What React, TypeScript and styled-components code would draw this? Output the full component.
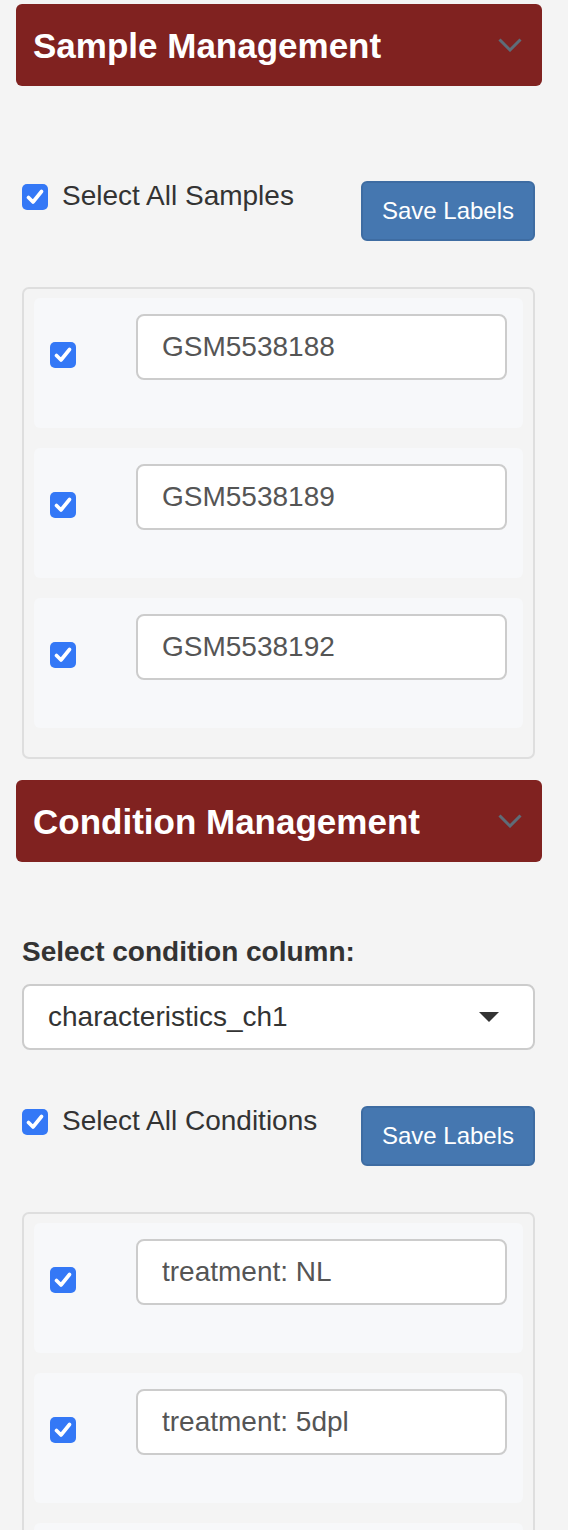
import React from 'react';
import styled, { createGlobalStyle } from 'styled-components';

const GlobalStyle = createGlobalStyle`
  html, body {
    margin: 0;
    padding: 0;
    background: #f4f4f4;
  }
  body {
    font-family: "Liberation Sans", Arial, Helvetica, sans-serif;
    color: #333;
  }
  * { box-sizing: border-box; }
`;

const Page = styled.div`
  width: 568px;
  padding: 4px 26px 40px 16px;
`;

const PanelHeader = styled.div<{ $top?: number }>`
  display: flex;
  align-items: center;
  justify-content: space-between;
  height: 82px;
  margin-top: ${(p) => p.$top ?? 0}px;
  padding: 0 20px 0 17px;
  background: #802220;
  border-radius: 6px;
`;

const PanelTitle = styled.h2`
  margin: 0;
  font-size: 35px;
  font-weight: 700;
  line-height: 1;
  color: #ffffff;
`;

const Chevron = styled.svg`
  width: 24px;
  height: 14px;
  display: block;
`;

const Body = styled.div`
  margin: 0 7px 0 6px;
`;

const SelectAllRow = styled.div<{ $top: number }>`
  display: flex;
  justify-content: space-between;
  align-items: flex-start;
  margin-top: ${(p) => p.$top}px;
`;

const CheckLabel = styled.label`
  display: flex;
  align-items: flex-start;
  gap: 14px;
  font-size: 28px;
  line-height: 40px;
  color: #333;
`;

const Box = styled.span<{ $top?: number }>`
  display: inline-flex;
  align-items: center;
  justify-content: center;
  flex: none;
  width: 26px;
  height: 26px;
  margin-top: ${(p) => p.$top ?? 0}px;
  background: #3478f6;
  border-radius: 5px;
`;

const SaveButton = styled.button`
  margin-top: 5px;
  height: 60px;
  padding: 0 19px;
  font-family: inherit;
  font-size: 24px;
  color: #ffffff;
  background: #4577b0;
  border: 2px solid #3e6ca2;
  border-radius: 6px;
`;

const ListBox = styled.div`
  margin-top: 46px;
  padding: 9px 10px;
  border: 2px solid #dedede;
  border-radius: 7px;
`;

const Item = styled.div`
  display: flex;
  align-items: flex-start;
  margin-bottom: 20px;
  padding: 16px 16px 48px;
  background: #f7f8fa;
  border-radius: 6px;
`;

const ItemCheckCol = styled.div`
  width: 86px;
  flex: none;
  padding-top: 28px;
`;

const LabelInput = styled.input`
  flex: 1;
  min-width: 0;
  height: 66px;
  padding: 0 24px;
  font-family: inherit;
  font-size: 28px;
  color: #555;
  background: #ffffff;
  border: 2px solid #cccccc;
  border-radius: 8px;
  outline: none;
`;

const FieldLabel = styled.label`
  display: block;
  margin-top: 70px;
  margin-bottom: 12px;
  font-size: 28px;
  font-weight: 700;
  line-height: 40px;
  color: #333;
`;

const SelectBox = styled.div`
  display: flex;
  align-items: center;
  justify-content: space-between;
  height: 66px;
  padding: 0 34px 0 24px;
  font-size: 28px;
  color: #333;
  background: #ffffff;
  border: 2px solid #cccccc;
  border-radius: 8px;
`;

const Caret = styled.span`
  width: 0;
  height: 0;
  border-left: 10px solid transparent;
  border-right: 10px solid transparent;
  border-top: 10px solid #333;
`;

const CheckMark = () => (
  <svg width="18" height="16" viewBox="0 0 18 16">
    <polyline
      points="2.5,8.5 7,13 15.5,2.5"
      fill="none"
      stroke="#ffffff"
      strokeWidth="3.6"
      strokeLinecap="round"
      strokeLinejoin="round"
    />
  </svg>
);

const Checkbox = ({ top }: { top?: number }) => (
  <Box $top={top}>
    <CheckMark />
  </Box>
);

const Header = ({ title, top }: { title: string; top?: number }) => (
  <PanelHeader $top={top}>
    <PanelTitle>{title}</PanelTitle>
    <Chevron viewBox="0 0 24 14">
      <polyline
        points="1.5,1.5 12,12 22.5,1.5"
        fill="none"
        stroke="#5e6c78"
        strokeWidth="3"
      />
    </Chevron>
  </PanelHeader>
);

const LabelList = ({ values }: { values: string[] }) => (
  <ListBox>
    {values.map((v) => (
      <Item key={v}>
        <ItemCheckCol>
          <Checkbox />
        </ItemCheckCol>
        <LabelInput defaultValue={v} />
      </Item>
    ))}
  </ListBox>
);

export default function App() {
  return (
    <>
      <GlobalStyle />
      <Page>
        <Header title="Sample Management" />
        <Body>
          <SelectAllRow $top={90}>
            <CheckLabel>
              <Checkbox top={8} />
              Select All Samples
            </CheckLabel>
            <SaveButton>Save Labels</SaveButton>
          </SelectAllRow>
          <LabelList values={['GSM5538188', 'GSM5538189', 'GSM5538192']} />
        </Body>
        <Header title="Condition Management" top={21} />
        <Body>
          <FieldLabel>Select condition column:</FieldLabel>
          <SelectBox>
            <span>characteristics_ch1</span>
            <Caret />
          </SelectBox>
          <SelectAllRow $top={51}>
            <CheckLabel>
              <Checkbox top={8} />
              Select All Conditions
            </CheckLabel>
            <SaveButton>Save Labels</SaveButton>
          </SelectAllRow>
          <LabelList values={['treatment: NL', 'treatment: 5dpl', 'treatment: 10dpl']} />
        </Body>
      </Page>
    </>
  );
}
